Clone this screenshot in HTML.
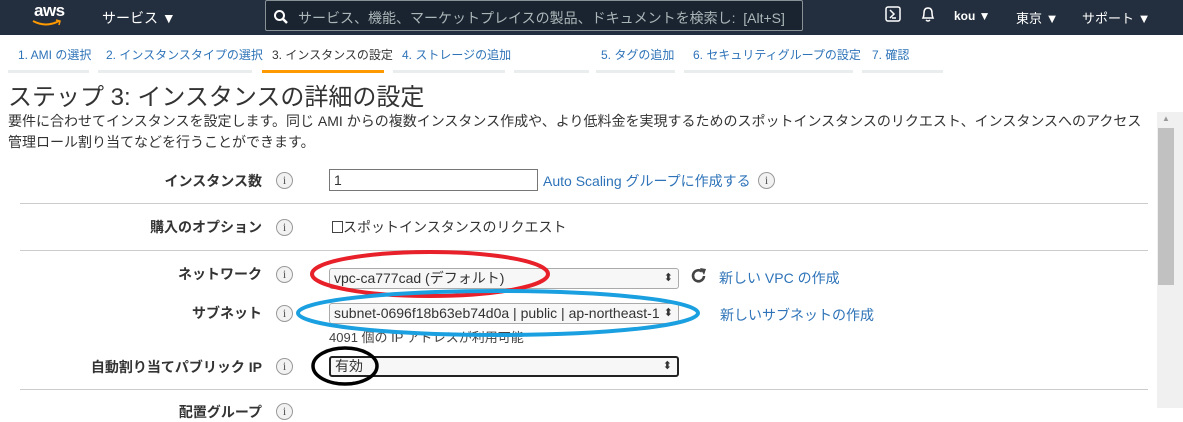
<!DOCTYPE html>
<html><head><meta charset="utf-8"><style>
*{margin:0;padding:0;box-sizing:border-box}
body{width:1183px;height:408px;overflow:hidden;background:#fff;font-family:"Liberation Sans","Noto Sans CJK JP",sans-serif;color:#333;position:relative}
.a{position:absolute;white-space:nowrap}
.nav{position:absolute;left:0;top:0;width:1183px;height:35px;background:#232f3e;color:#fff;font-size:14px}
.tab{position:absolute;top:47px;font-size:12px;color:#2e73b8;border-bottom:3px solid #eaeded;height:26px;padding-left:10px;white-space:nowrap;line-height:16px}
.lbl{position:absolute;right:921px;font-size:14px;font-weight:bold;color:#333;white-space:nowrap}
.info{position:absolute;left:276px;width:17px;height:17px;border:1px solid #999;border-radius:50%;background:#f2f2f2;font-size:12px;text-align:center;line-height:15px;color:#555;font-family:"Liberation Serif",serif}
.sel{position:absolute;left:329px;width:350px;height:21px;border:1px solid #aaa;border-radius:3px;background:#f7f7f7;font-size:14px;padding-left:4px;line-height:19px;white-space:nowrap}
.sel:after{content:"⬍";position:absolute;right:5px;top:0;font-size:11px;color:#333}
.hr{position:absolute;left:20px;width:1128px;height:1px;background:#ccc}
.lnk{color:#2e73b8}
</style></head><body>
<div class="nav">
 <div class="a" style="left:34px;top:1px;font-size:17px;font-weight:bold;letter-spacing:-0.5px">aws</div>
 <svg class="a" style="left:32px;top:19px" width="30" height="8"><path d="M1 2 Q14 9 27 2" stroke="#f90" stroke-width="2" fill="none"/><path d="M24 1 L28 2 L27 6" stroke="#f90" stroke-width="1.5" fill="none"/></svg>
 <div class="a" style="left:102px;top:8px">サービス ▼</div>
 <div class="a" style="left:265px;top:0px;width:538px;height:31px;border:1px solid #879196;border-radius:2px;background:#1a2330"></div>
 <svg class="a" style="left:273px;top:9px" width="16" height="16"><circle cx="6.5" cy="6.5" r="4.5" stroke="#fff" stroke-width="2" fill="none"/><path d="M10 10 L14 14" stroke="#fff" stroke-width="2.5"/></svg>
 <div class="a" style="left:298px;top:8px;color:#aab7b8;font-size:14px">サービス、機能、マーケットプレイスの製品、ドキュメントを検索し: &nbsp;[Alt+S]</div>
 <svg class="a" style="left:885px;top:6px" width="16" height="16"><rect x="1" y="1" width="14" height="14" rx="2" stroke="#fff" stroke-width="1.5" fill="none"/><path d="M5 4 L9 8 L5 12 M7 12 H11" stroke="#fff" stroke-width="1.5" fill="none"/></svg>
 <svg class="a" style="left:920px;top:6px" width="16" height="17"><path d="M3 12 Q4 10 4 7 Q4 2 8 2 Q12 2 12 7 Q12 10 13 12 Z M6 14 Q8 16 10 14" stroke="#fff" stroke-width="1.5" fill="none"/></svg>
 <div class="a" style="left:954px;top:9px;font-size:12px;font-weight:bold">kou ▼</div>
 <div class="a" style="left:1016px;top:8px;font-size:13px">東京 ▼</div>
 <div class="a" style="left:1082px;top:8px;font-size:13px">サポート ▼</div>
</div>
<div class="tab" style="left:8px;width:81px">1. AMI の選択</div>
<div class="tab" style="left:98px;width:154px;padding-left:8px">2. インスタンスタイプの選択</div>
<div class="tab" style="left:262px;width:122px;color:#333;border-bottom-color:#f90">3. インスタンスの設定</div>
<div class="tab" style="left:393px;width:112px;padding-left:9px">4. ストレージの追加</div>
<div class="tab" style="left:514px;width:75px;padding-left:0"></div>
<div class="tab" style="left:596px;width:79px;padding-left:5px">5. タグの追加</div>
<div class="tab" style="left:684px;width:169px;padding-left:9px">6. セキュリティグループの設定</div>
<div class="tab" style="left:862px;width:81px;padding-left:10px">7. 確認</div>
<div class="a" style="left:8px;top:84px;font-size:24px;line-height:28px;color:#333">ステップ 3: インスタンスの詳細の設定</div>
<div class="a" style="left:8px;top:111px;font-size:14px;line-height:21px">要件に合わせてインスタンスを設定します。同じ AMI からの複数インスタンス作成や、より低料金を実現するためのスポットインスタンスのリクエスト、インスタンスへのアクセス<br>管理ロール割り当てなどを行うことができます。</div>
<div class="a" style="left:1157px;top:112px;width:26px;height:296px;background:#f0f0f0"></div>
<div class="a" style="left:1162px;top:114px;font-size:8px;color:#999">▲</div>
<div class="a" style="left:1158px;top:128px;width:16px;height:157px;background:#c1c1c1"></div>

<div class="lbl" style="top:171px">インスタンス数</div><div class="info" style="top:172px">i</div>
<div class="a" style="left:329px;top:169px;width:209px;height:22px;border:1px solid #777;font-size:14px;padding-left:4px;line-height:20px">1</div>
<div class="a lnk" style="left:543px;top:171px;font-size:14px">Auto Scaling グループに作成する</div><div class="info" style="top:172px;left:758px">i</div>
<div class="hr" style="top:203px"></div>
<div class="lbl" style="top:217px">購入のオプション</div><div class="info" style="top:219px">i</div>
<div class="a" style="left:332px;top:217px;font-size:14px"><span style="display:inline-block;width:11px;height:12px;border:1px solid #444;vertical-align:-1px"></span>スポットインスタンスのリクエスト</div>
<div class="hr" style="top:250px"></div>
<div class="lbl" style="top:264px">ネットワーク</div><div class="info" style="top:266px">i</div>
<div class="sel" style="top:268px">vpc-ca777cad (デフォルト)</div>
<svg class="a" style="left:690px;top:267px" width="18" height="18"><path d="M14 9 A5.5 5.5 0 1 1 12 4.5" stroke="#444" stroke-width="2.6" fill="none"/><path d="M10 1 L16 2 L14 8 Z" fill="#444"/></svg>
<div class="a lnk" style="left:719px;top:268px;font-size:14px">新しい VPC の作成</div>
<div class="lbl" style="top:303px">サブネット</div><div class="info" style="top:305px">i</div>
<div class="sel" style="top:303px">subnet-0696f18b63eb74d0a | public | ap-northeast-1</div>
<div class="a lnk" style="left:720px;top:305px;font-size:14px">新しいサブネットの作成</div>
<div class="a" style="left:329px;top:327px;font-size:13px;color:#444">4091 個の IP アドレスが利用可能</div>
<div class="lbl" style="top:357px">自動割り当てパブリック IP</div><div class="info" style="top:358px">i</div>
<div class="sel" style="top:356px;border:2px solid #222;line-height:17px">有効</div>
<div class="hr" style="top:389px"></div>
<div class="lbl" style="top:402px">配置グループ</div><div class="info" style="top:403px">i</div>
<svg class="a" style="left:0;top:0" width="1183" height="408">
<ellipse cx="430" cy="274" rx="118" ry="22" stroke="#e8202a" stroke-width="4" fill="none"/>
<ellipse cx="498" cy="313" rx="200" ry="22" stroke="#1aa0e0" stroke-width="4" fill="none"/>
<ellipse cx="345" cy="366" rx="32" ry="18" stroke="#000" stroke-width="3.5" fill="none"/>
</svg>
</body></html>
